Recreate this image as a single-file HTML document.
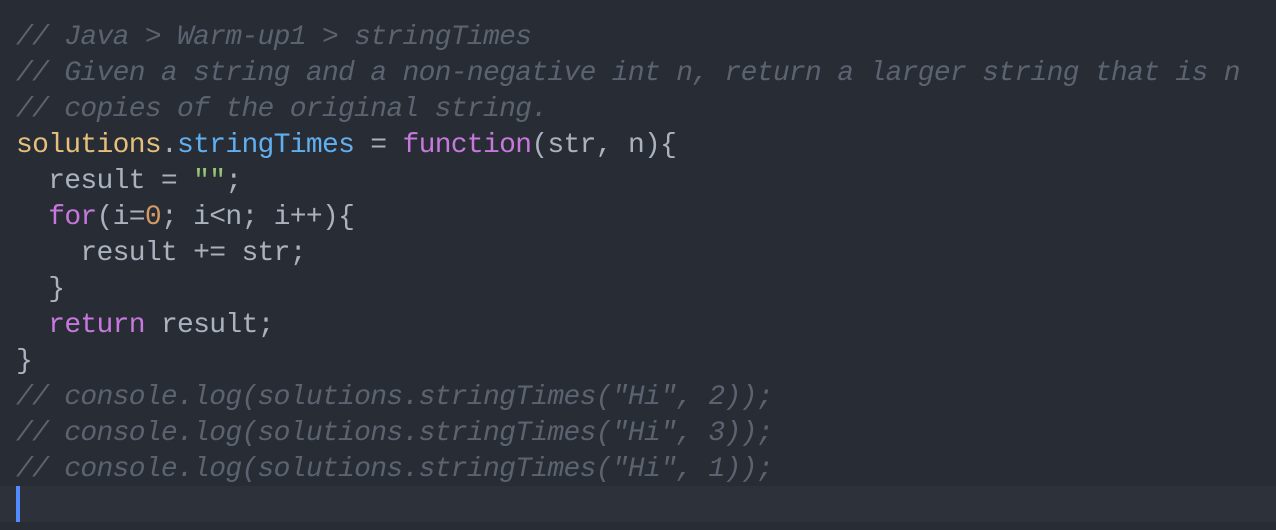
<!DOCTYPE html><html><head><style>
body{margin:0;background:#282c34;width:1276px;height:530px;overflow:hidden}
pre{margin:0;position:absolute;top:20px;left:16px;font-family:"Liberation Mono",monospace;font-size:28px;letter-spacing:-0.7px;line-height:36px;color:#abb2bf}
.c{color:#5c6370;font-style:italic}.y{color:#e5c07b}.b{color:#61afef}.p{color:#c678dd}.g{color:#98c379}.o{color:#d19a66}
.hl{position:absolute;left:0;top:486px;width:1276px;height:36px;background:#2c313a}
.cur{position:absolute;left:16px;top:486px;width:4px;height:36px;background:#528bff}
</style></head><body><div class="hl"></div><div class="cur"></div><pre><span class="c">// Java &gt; Warm-up1 &gt; stringTimes</span>
<span class="c">// Given a string and a non-negative int n, return a larger string that is n</span>
<span class="c">// copies of the original string.</span>
<span class="y">solutions</span>.<span class="b">stringTimes</span> = <span class="p">function</span>(str, n){
  result = <span class="g">""</span>;
  <span class="p">for</span>(i=<span class="o">0</span>; i&lt;n; i++){
    result += str;
  }
  <span class="p">return</span> result;
}
<span class="c">// console.log(solutions.stringTimes("Hi", 2));</span>
<span class="c">// console.log(solutions.stringTimes("Hi", 3));</span>
<span class="c">// console.log(solutions.stringTimes("Hi", 1));</span>
</pre></body></html>
